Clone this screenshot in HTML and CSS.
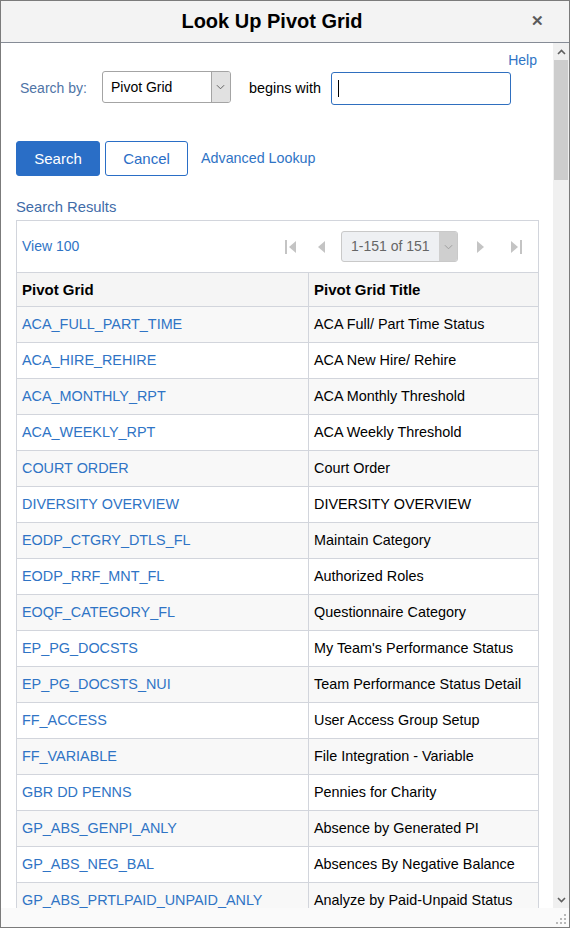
FILE: index.html
```html
<!DOCTYPE html>
<html lang="en">
<head>
  <meta charset="UTF-8" />
  <title>Look Up Pivot Grid</title>
  <link rel="stylesheet" href="styles.css">
</head>
<body>
  <div class="dialog">
    <header class="dlg-head">
      <h1>Look Up Pivot Grid</h1>
      <span class="close">&#x2715;</span>
    </header>

    <div class="dlg-main">
      <div class="dlg-body">
        <div class="help-row"><a href="#" class="link">Help</a></div>

        <!-- search criteria -->
        <div class="search-row">
          <label class="lbl">Search by:</label>
          <div class="select">
            <span class="select-val">Pivot Grid</span>
            <span class="select-btn">
              <svg viewBox="0 0 10 6" width="9" height="6"><path d="M1 1 L5 5 L9 1" fill="none" stroke="#555" stroke-width="1"/></svg>
            </span>
          </div>
          <span class="op">begins with</span>
          <div class="input"><span class="caret"></span></div>
        </div>

        <div class="btn-row">
          <button class="btn primary">Search</button>
          <button class="btn">Cancel</button>
          <a href="#" class="link adv">Advanced Lookup</a>
        </div>

        <div class="results-title">Search Results</div>

        <table class="grid">
          <colgroup><col class="c1"><col></colgroup>
          <tr class="nav">
            <td colspan="2">
              <div class="nav-inner">
                <a href="#" class="link">View 100</a>
                <div class="pager">
                  <svg class="pg-ico" viewBox="0 0 12 14" width="12" height="14"><rect x="0" y="0" width="2" height="14" fill="#c4c4c4"/><path d="M11 1 L4 7 L11 13 Z" fill="#c4c4c4"/></svg>
                  <svg class="pg-ico prev" viewBox="0 0 9 14" width="9" height="14"><path d="M8 1 L1 7 L8 13 Z" fill="#c4c4c4"/></svg>
                  <div class="pg-select">
                    <span class="pg-val">1-151 of 151</span>
                    <span class="pg-btn">
                      <svg viewBox="0 0 10 6" width="9" height="6"><path d="M1 1 L5 5 L9 1" fill="none" stroke="#9a9a9a" stroke-width="1"/></svg>
                    </span>
                  </div>
                  <svg class="pg-ico next" viewBox="0 0 9 14" width="9" height="14"><path d="M1 1 L8 7 L1 13 Z" fill="#c4c4c4"/></svg>
                  <svg class="pg-ico last" viewBox="0 0 12 14" width="12" height="14"><path d="M1 1 L8 7 L1 13 Z" fill="#c4c4c4"/><rect x="10" y="0" width="2" height="14" fill="#c4c4c4"/></svg>
                </div>
              </div>
            </td>
          </tr>
          <tr class="colhead">
            <th>Pivot Grid</th>
            <th>Pivot Grid Title</th>
          </tr>
          <tr><td><a href="#" class="link">ACA_FULL_PART_TIME</a></td><td>ACA Full/ Part Time Status</td></tr>
          <tr><td><a href="#" class="link">ACA_HIRE_REHIRE</a></td><td>ACA New Hire/ Rehire</td></tr>
          <tr><td><a href="#" class="link">ACA_MONTHLY_RPT</a></td><td>ACA Monthly Threshold</td></tr>
          <tr><td><a href="#" class="link">ACA_WEEKLY_RPT</a></td><td>ACA Weekly Threshold</td></tr>
          <tr><td><a href="#" class="link">COURT ORDER</a></td><td>Court Order</td></tr>
          <tr><td><a href="#" class="link">DIVERSITY OVERVIEW</a></td><td>DIVERSITY OVERVIEW</td></tr>
          <tr><td><a href="#" class="link">EODP_CTGRY_DTLS_FL</a></td><td>Maintain Category</td></tr>
          <tr><td><a href="#" class="link">EODP_RRF_MNT_FL</a></td><td>Authorized Roles</td></tr>
          <tr><td><a href="#" class="link">EOQF_CATEGORY_FL</a></td><td>Questionnaire Category</td></tr>
          <tr><td><a href="#" class="link">EP_PG_DOCSTS</a></td><td>My Team's Performance Status</td></tr>
          <tr><td><a href="#" class="link">EP_PG_DOCSTS_NUI</a></td><td>Team Performance Status Detail</td></tr>
          <tr><td><a href="#" class="link">FF_ACCESS</a></td><td>User Access Group Setup</td></tr>
          <tr><td><a href="#" class="link">FF_VARIABLE</a></td><td>File Integration - Variable</td></tr>
          <tr><td><a href="#" class="link">GBR DD PENNS</a></td><td>Pennies for Charity</td></tr>
          <tr><td><a href="#" class="link">GP_ABS_GENPI_ANLY</a></td><td>Absence by Generated PI</td></tr>
          <tr><td><a href="#" class="link">GP_ABS_NEG_BAL</a></td><td>Absences By Negative Balance</td></tr>
          <tr><td><a href="#" class="link">GP_ABS_PRTLPAID_UNPAID_ANLY</a></td><td>Analyze by Paid-Unpaid Status</td></tr>
        </table>
      </div>

      <!-- vertical scrollbar -->
      <div class="vscroll">
        <span class="arrow">
          <svg viewBox="0 0 9 6" width="9" height="6"><path d="M1 5 L4.5 1.5 L8 5" fill="none" stroke="#606060" stroke-width="1.6"/></svg>
        </span>
        <span class="thumb"></span>
        <span class="track"></span>
        <span class="arrow">
          <svg viewBox="0 0 9 6" width="9" height="6"><path d="M1 1 L4.5 4.5 L8 1" fill="none" stroke="#606060" stroke-width="1.6"/></svg>
        </span>
      </div>
    </div>

    <footer class="dlg-foot">
      <svg class="grip" viewBox="0 0 11 11" width="11" height="11">
        <rect x="8" y="0" width="2" height="2" fill="#b8b8b8"/>
        <rect x="4" y="4" width="2" height="2" fill="#b8b8b8"/>
        <rect x="8" y="4" width="2" height="2" fill="#b8b8b8"/>
        <rect x="0" y="8" width="2" height="2" fill="#b8b8b8"/>
        <rect x="4" y="8" width="2" height="2" fill="#b8b8b8"/>
        <rect x="8" y="8" width="2" height="2" fill="#b8b8b8"/>
      </svg>
    </footer>
  </div>
</body>
</html>
```

FILE: styles.css
```css
body {margin:0; padding:0; font-family:"Liberation Sans", Arial, sans-serif; font-size:14px; color:#000;}

.dialog {width:570px; height:928px; box-sizing:border-box; border:1px solid #7b7b7b;
  display:flex; flex-direction:column; background:#fff; overflow:hidden;}

/* title bar */
.dlg-head {height:41px; flex:none; background:#f3f3f3; border-bottom:1px solid #868c96;
  display:flex; align-items:center; justify-content:center; position:relative; padding-right:26px;}
.dlg-head h1 {margin:0; font-size:20px; font-weight:bold;}
.close {position:absolute; right:25px; top:11px; font-size:15px; font-weight:bold; color:#5a5a5a;}

.dlg-main {flex:1; display:flex; min-height:0;}
.dlg-body {flex:1; overflow:hidden; padding:0 13px 0 15px;}

.link {color:#2f74c5; text-decoration:none;}

.help-row {display:flex; justify-content:flex-end; padding-top:8px; line-height:18px; padding-right:3px;}

/* search by row */
.search-row {display:flex; align-items:center; height:33px; margin-top:2px;}
.lbl {color:#4f74a6; margin-left:4px; margin-right:15px;}
.select {width:127px; height:30px; border:1px solid #a4a4a4; border-radius:3px; display:flex;
  align-items:stretch; overflow:hidden; margin-bottom:1px;}
.select-val {flex:1; padding-left:8px; line-height:30px;}
.select-btn {width:18px; background:#e1e1e1; border-left:1px solid #a4a4a4; display:flex;
  align-items:center; justify-content:center;}
.op {margin-left:18px; margin-right:10px; font-size:14.4px;}
.input {width:178px; height:31px; border:1px solid #2f6fbf; border-radius:3px; display:flex;
  align-items:center; margin-top:1px;}
.caret {width:1px; height:17px; background:#000; margin-left:6px;}

/* buttons */
.btn-row {display:flex; align-items:center; margin-top:37px; height:35px;}
.btn {font-family:inherit; font-size:15px; height:35px; border-radius:3px; border:1px solid #2a6ec6;
  background:#fff; color:#2a6ec6; width:83px; padding:0; margin-right:5px;}
.btn.primary {background:#2a6ec6; color:#fff; width:84px;}
.adv {margin-left:8px; margin-top:-2px; font-size:14.3px;}

.results-title {color:#3f6ca8; line-height:18px; margin-top:22px; font-size:14.8px;}

/* result grid */
.grid {border-collapse:collapse; width:523px; margin-top:4px; table-layout:fixed;}
.grid col.c1 {width:292px;}
.grid td, .grid th {border:1px solid #d2d5dc; padding:0 5px; text-align:left; white-space:nowrap;
  line-height:35px; height:35px; box-sizing:border-box; overflow:hidden; font-size:14.4px;}
.grid th {font-weight:bold; background:#f5f5f5; line-height:33px; height:33px; font-size:15px;}
.grid tr:nth-child(odd) td {background:#f8f8f8;}
.grid tr.nav td {background:#fff; height:51px; line-height:51px; padding:0 5px; font-size:14px;}

.nav-inner {display:flex; align-items:center; justify-content:space-between;}
.pager {display:flex; align-items:center; padding-right:11px;}
.pg-ico {display:block;}
.pg-ico.prev {margin-left:20px; margin-right:15px;}
.pg-ico.next {margin-left:18px; margin-right:25px;}
.pg-select {width:115px; height:29px; border:1px solid #c9c9c9; border-radius:3px; background:#eef0f3;
  display:flex; overflow:hidden; line-height:29px;}
.pg-val {flex:1; color:#666; padding-left:9px;}
.pg-btn {width:18px; background:#cfcfcf; display:flex; align-items:center; justify-content:center;}

/* scrollbar */
.vscroll {width:16px; flex:none; background:#f0f0f0; display:flex; flex-direction:column;}
.vscroll .arrow {height:17px; display:flex; align-items:center; justify-content:center; flex:none;}
.vscroll .thumb {height:120px; background:#cdcdcd; margin:0 1px; flex:none;}
.vscroll .track {flex:1;}

.dlg-foot {height:19px; flex:none; background:#fafafa; display:flex; justify-content:flex-end; align-items:flex-end;}
.grip {margin:0 2px 2px 0;}
```
